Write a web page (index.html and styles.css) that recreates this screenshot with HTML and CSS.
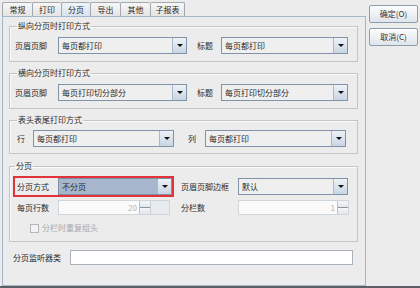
FILE: index.html
```html
<!DOCTYPE html>
<html lang="zh-CN">
<head>
    <meta charset="UTF-8">
    <title>分页设置</title>
    <link rel="stylesheet" href="styles.css">
</head>
<body>
<div class="window">
    <div class="main">
        <ul class="tabs">
            <li class="tab t-wide">常规</li>
            <li class="tab">打印</li>
            <li class="tab active">分页</li>
            <li class="tab t-wide">导出</li>
            <li class="tab t-wide">其他</li>
            <li class="tab t-big">子报表</li>
        </ul>
        <div class="panel">
            <fieldset class="group g1">
                <legend>纵向分页时打印方式</legend>
                <div class="row">
                    <span class="lbl w43">页眉页脚</span>
                    <div class="combo w129"><span class="val">每页都打印</span><i class="arrow"></i></div>
                    <span class="lbl w24 ml10">标题</span>
                    <div class="combo w127"><span class="val">每页都打印</span><i class="arrow"></i></div>
                </div>
            </fieldset>
            <fieldset class="group g2">
                <legend>横向分页时打印方式</legend>
                <div class="row">
                    <span class="lbl w43">页眉页脚</span>
                    <div class="combo w129"><span class="val">每页打印切分部分</span><i class="arrow"></i></div>
                    <span class="lbl w24 ml10">标题</span>
                    <div class="combo w127"><span class="val">每页打印切分部分</span><i class="arrow"></i></div>
                </div>
            </fieldset>
            <fieldset class="group g3">
                <legend>表头表尾打印方式</legend>
                <div class="row r3">
                    <span class="lbl w18 pl2">行</span>
                    <div class="combo w141"><span class="val">每页都打印</span><i class="arrow"></i></div>
                    <span class="lbl w17 ml14">列</span>
                    <div class="combo w141"><span class="val">每页都打印</span><i class="arrow"></i></div>
                </div>
            </fieldset>
            <fieldset class="group g4">
                <legend>分页</legend>
                <div class="row">
                    <div class="mark">
                        <span class="lbl w41">分页方式</span>
                        <div class="combo sel w114"><span class="val">不分页</span><i class="arrow"></i></div>
                    </div>
                    <span class="lbl w57 ml7">页眉页脚边框</span>
                    <div class="combo w110"><span class="val">默认</span><i class="arrow"></i></div>
                </div>
                <div class="row r-spin">
                    <span class="lbl w41">每页行数</span>
                    <div class="spin w112">
                        <span class="num">20</span>
                        <span class="btns"><i></i><i></i></span>
                        <span class="pad"></span>
                    </div>
                    <span class="lbl w57 ml11">分栏数</span>
                    <div class="spin w111">
                        <span class="num">1</span>
                        <span class="btns"><i></i><i></i></span>
                    </div>
                </div>
                <div class="row r-check">
                    <span class="box"></span>
                    <span class="dis">分栏时重复组头</span>
                </div>
            </fieldset>
            <div class="row listener">
                <span class="lbl w57">分页监听器类</span>
                <div class="field"></div>
            </div>
        </div>
    </div>
    <div class="side">
        <button class="btn">确定(O)</button>
        <button class="btn">取消(C)</button>
    </div>
</div>
</body>
</html>
```

FILE: styles.css
```css
html, body {
    margin: 0;
    padding: 0;
}
body {
    width: 420px;
    height: 288px;
    overflow: hidden;
    background: #ececec;
    font: 8px/10px "Noto Sans CJK SC", "Noto Sans", sans-serif;
    color: #2a2a2a;
}
.window {
    display: flex;
    height: 286px;
    border-bottom: 2px solid #5c5f63;
}
.main {
    width: 364px;
    margin-left: 2px;
    display: flex;
    flex-direction: column;
}
.side {
    display: flex;
    flex-direction: column;
    gap: 5px;
    padding: 5px 0 0 3px;
}
.btn {
    width: 49px;
    height: 18px;
    padding: 0;
    font: inherit;
    color: #333;
    border: 1px solid #8d9cae;
    border-radius: 2px;
    background: linear-gradient(#fbfcfd, #dfe5ec);
}

/* tabs */
.tabs {
    display: flex;
    margin: 2px 0 0;
    padding: 0;
    list-style: none;
    height: 14px;
}
.tab {
    width: 29px;
    box-sizing: border-box;
    text-align: center;
    line-height: 13px;
    border: 1px solid #a5a9ad;
    border-bottom: 0;
    border-right: 0;
    border-radius: 2px 2px 0 0;
    background: linear-gradient(#f7f7f7, #e4e4e4);
}
.tab:last-child {
    border-right: 1px solid #a5a9ad;
}
.t-wide { width: 30px; }
.t-big { width: 35px; }
.tab.active {
    background: linear-gradient(#eef4fb, #d6e3f1);
}

.panel {
    flex: 1;
    border: 1px solid #a3b6cb;
    padding: 4px 0 0;
    display: flex;
    flex-direction: column;
}

/* group boxes */
.group {
    margin: 0 7px 0 6px;
    padding: 6px 0 7px 5px;
    border: 1px solid #c4c4c4;
    box-shadow: inset 1px 1px 0 #fafafa;
    min-width: 0;
}
.group legend {
    padding: 0 1px;
    margin-left: 2px;
    line-height: 10px;
}
.g2 { margin-top: 6px; }
.g3 { margin-top: 6px; padding-top: 5px; padding-bottom: 6px; }
.g4 { margin-top: 7px; padding: 5px 0 8px 3px; }

.row {
    display: flex;
    align-items: center;
}
.lbl {
    flex: none;
    white-space: nowrap;
}
.w17 { width: 17px; }
.w18 { width: 18px; }
.w24 { width: 24px; }
.w41 { width: 41px; }
.w43 { width: 43px; }
.w57 { width: 57px; }
.pl2 { padding-left: 2px; box-sizing: border-box; }
.ml7 { margin-left: 7px; }
.ml10 { margin-left: 10px; }
.ml11 { margin-left: 11px; }
.ml14 { margin-left: 14px; }

/* combo box */
.combo {
    flex: none;
    height: 17px;
    box-sizing: border-box;
    display: flex;
    border: 1px solid #8193a8;
    background: #efefef;
}
.w110 { width: 110px; }
.w111 { width: 111px; }
.w112 { width: 112px; }
.w114 { width: 114px; }
.w127 { width: 127px; }
.w129 { width: 129px; }
.w141 { width: 141px; }
.combo .val {
    flex: 1;
    padding-left: 3px;
    line-height: 15px;
}
.combo .arrow {
    width: 13px;
    border-left: 1px solid #aab8c8;
    background: linear-gradient(#edf2f8, #c9d5e3);
    position: relative;
}
.combo .arrow::after {
    content: "";
    position: absolute;
    left: 4px;
    top: 6px;
    border: 3px solid transparent;
    border-top: 3px solid #111;
    border-bottom: 0;
}
.combo.sel {
    background: #a6b7cd;
    border-color: #7d90a8;
}

.mark {
    display: flex;
    align-items: center;
    border: 2px solid #e2323a;
    padding: 0 0 0 2px;
}

/* spinners */
.r-spin {
    margin-top: 3px;
    padding-left: 4px;
}
.spin {
    flex: none;
    height: 15px;
    box-sizing: border-box;
    display: flex;
    border: 1px solid #cfd5db;
    background: #fafafa;
}
.spin .num {
    flex: 1;
    text-align: right;
    padding-right: 2px;
    line-height: 13px;
    color: #b4b4b4;
}
.spin .btns {
    width: 10px;
    display: flex;
    flex-direction: column;
    border-left: 1px solid #b9c2cc;
}
.spin .btns i {
    flex: 1;
    background: linear-gradient(#f4f6f8, #e2e7ec);
}
.spin .btns i + i {
    border-top: 1px solid #8c96a2;
}
.spin .pad {
    width: 18px;
    border-left: 1px solid #c4ccd4;
    background: #e9ecef;
}

.r-check {
    margin-top: 8px;
    padding-left: 17px;
}
.box {
    width: 9px;
    height: 9px;
    box-sizing: border-box;
    border: 1px solid #b3b8bd;
    background: #f3f3f3;
    margin-right: 3px;
}
.dis {
    color: #a9a9a9;
}

.listener {
    margin: 8px 0 0 10px;
}
.field {
    width: 283px;
    height: 15px;
    box-sizing: border-box;
    border: 1px solid #a9b1ba;
    background: #fff;
}
```
